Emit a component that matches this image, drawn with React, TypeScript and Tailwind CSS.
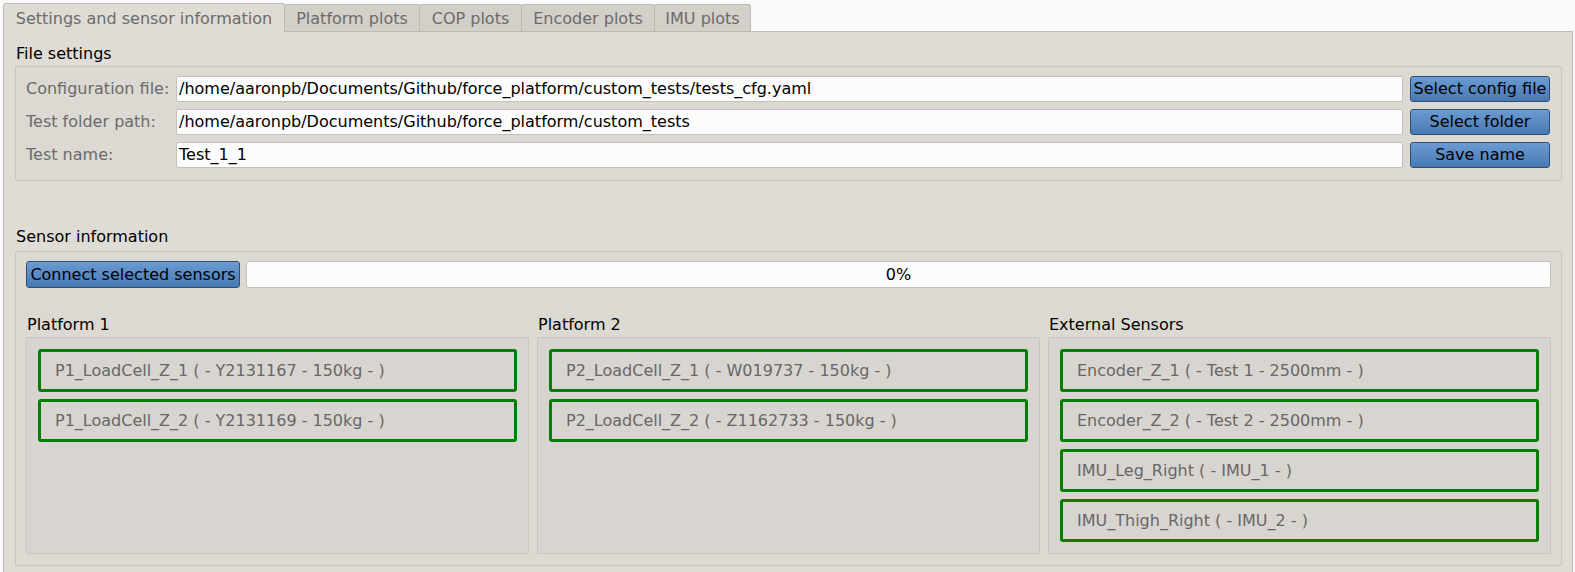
import React from "react";

const font = { fontFamily: '"DejaVu Sans", "Liberation Sans", sans-serif' };

function Btn({ children, className = "" }: { children: React.ReactNode; className?: string }) {
  return (
    <div
      className={
        "h-[26px] flex items-center justify-center rounded-[3px] border border-[#2c4f7a] bg-gradient-to-b from-[#6a9bd1] to-[#4a79b2] text-[16px] text-black whitespace-nowrap " +
        className
      }
    >
      {children}
    </div>
  );
}

function Row({ label, value, btn }: { label: string; value: string; btn: string }) {
  return (
    <div className="flex items-center h-[26px]">
      <div className="w-[150px] text-[#6b6b6b] text-[16px] whitespace-nowrap">{label}</div>
      <div className="w-[1227px] h-[26px] bg-[#fcfcfc] border border-[#c4c1bb] rounded-[2px] flex items-center pl-[2px] text-[16px] text-black whitespace-nowrap">
        {value}
      </div>
      <Btn className="ml-[7px] w-[140px]">{btn}</Btn>
    </div>
  );
}

function Sensor({ text }: { text: string }) {
  return (
    <div className="h-[43px] shrink-0 border-[3px] border-[#047d04] rounded-[3px] flex items-center pl-[14px] text-[16px] text-[#676767] whitespace-nowrap">
      {text}
    </div>
  );
}

function Column({ title, items }: { title: string; items: string[] }) {
  return (
    <div className="flex-1 flex flex-col">
      <div className="h-[24px] pl-[1px] flex items-center text-[16px] text-black">{title}</div>
      <div className="flex-1 bg-[#d8d5d0] border border-[#c9c6c0] rounded-[2px] px-[11px] pt-[11px] flex flex-col gap-[7px]">
        {items.map((t) => (
          <Sensor key={t} text={t} />
        ))}
      </div>
    </div>
  );
}

export default function App() {
  const tabs = [
    { t: "Platform plots", w: "w-[136px]" },
    { t: "COP plots", w: "w-[103px]" },
    { t: "Encoder plots", w: "w-[134px]" },
    { t: "IMU plots", w: "w-[97px]" },
  ];
  return (
    <div className="w-[1575px] h-[572px] bg-[#fafafa] overflow-hidden flex flex-col" style={font}>
      <div className="flex items-end pl-[3px] pt-[3px] h-[31px] shrink-0">
        <div className="w-[282px] h-[29px] pt-[1px] bg-[#dfdcd6] border border-b-0 border-[#bdbab4] rounded-t-[3px] flex items-center justify-center text-[16px] text-[#6b6b6b] -mb-[1px] relative z-10">
          Settings and sensor information
        </div>
        {tabs.map((x) => (
          <div
            key={x.t}
            className={
              x.w +
              " h-[27px] pt-[1px] bg-[#d3d0ca] border border-b-0 border-[#bdbab4] rounded-t-[3px] flex items-center justify-center text-[16px] text-[#6b6b6b] -ml-[1px]"
            }
          >
            {x.t}
          </div>
        ))}
      </div>
      <div className="ml-[3px] w-[1570px] h-[560px] shrink-0 bg-[#dfdcd6] border border-[#bdbab4] pl-[11px] pr-[10px] flex flex-col">
        <div className="h-[34px] pt-[10px] pl-[1px] flex items-center text-[16px] text-black">File settings</div>
        <div className="h-[115px] bg-[#dcd9d3] border border-[#c9c6c0] rounded-[2px] pl-[10px] pt-[9px] flex flex-col gap-[7px]">
          <Row
            label="Configuration file:"
            value="/home/aaronpb/Documents/Github/force_platform/custom_tests/tests_cfg.yaml"
            btn="Select config file"
          />
          <Row
            label="Test folder path:"
            value="/home/aaronpb/Documents/Github/force_platform/custom_tests"
            btn="Select folder"
          />
          <Row label="Test name:" value="Test_1_1" btn="Save name" />
        </div>
        <div className="h-[70px] flex items-end pb-[2px] pl-[1px] text-[16px] text-black">Sensor information</div>
        <div className="h-[315px] bg-[#dcd9d3] border border-[#c9c6c0] rounded-[2px] px-[10px] pt-[9px] pb-[11px] flex flex-col">
          <div className="flex items-center gap-[6px] h-[27px]">
            <Btn className="w-[214px] h-[27px]">Connect selected sensors</Btn>
            <div className="flex-1 h-[27px] bg-[#fcfcfc] border border-[#c4c1bb] rounded-[2px] flex items-center justify-center text-[16px] text-black">
              0%
            </div>
          </div>
          <div className="flex gap-[8px] mt-[25px] flex-1">
            <Column
              title="Platform 1"
              items={["P1_LoadCell_Z_1 ( - Y2131167 - 150kg - )", "P1_LoadCell_Z_2 ( - Y2131169 - 150kg - )"]}
            />
            <Column
              title="Platform 2"
              items={["P2_LoadCell_Z_1 ( - W019737 - 150kg - )", "P2_LoadCell_Z_2 ( - Z1162733 - 150kg - )"]}
            />
            <Column
              title="External Sensors"
              items={[
                "Encoder_Z_1 ( - Test 1 - 2500mm - )",
                "Encoder_Z_2 ( - Test 2 - 2500mm - )",
                "IMU_Leg_Right ( - IMU_1 - )",
                "IMU_Thigh_Right ( - IMU_2 - )",
              ]}
            />
          </div>
        </div>
      </div>
    </div>
  );
}
